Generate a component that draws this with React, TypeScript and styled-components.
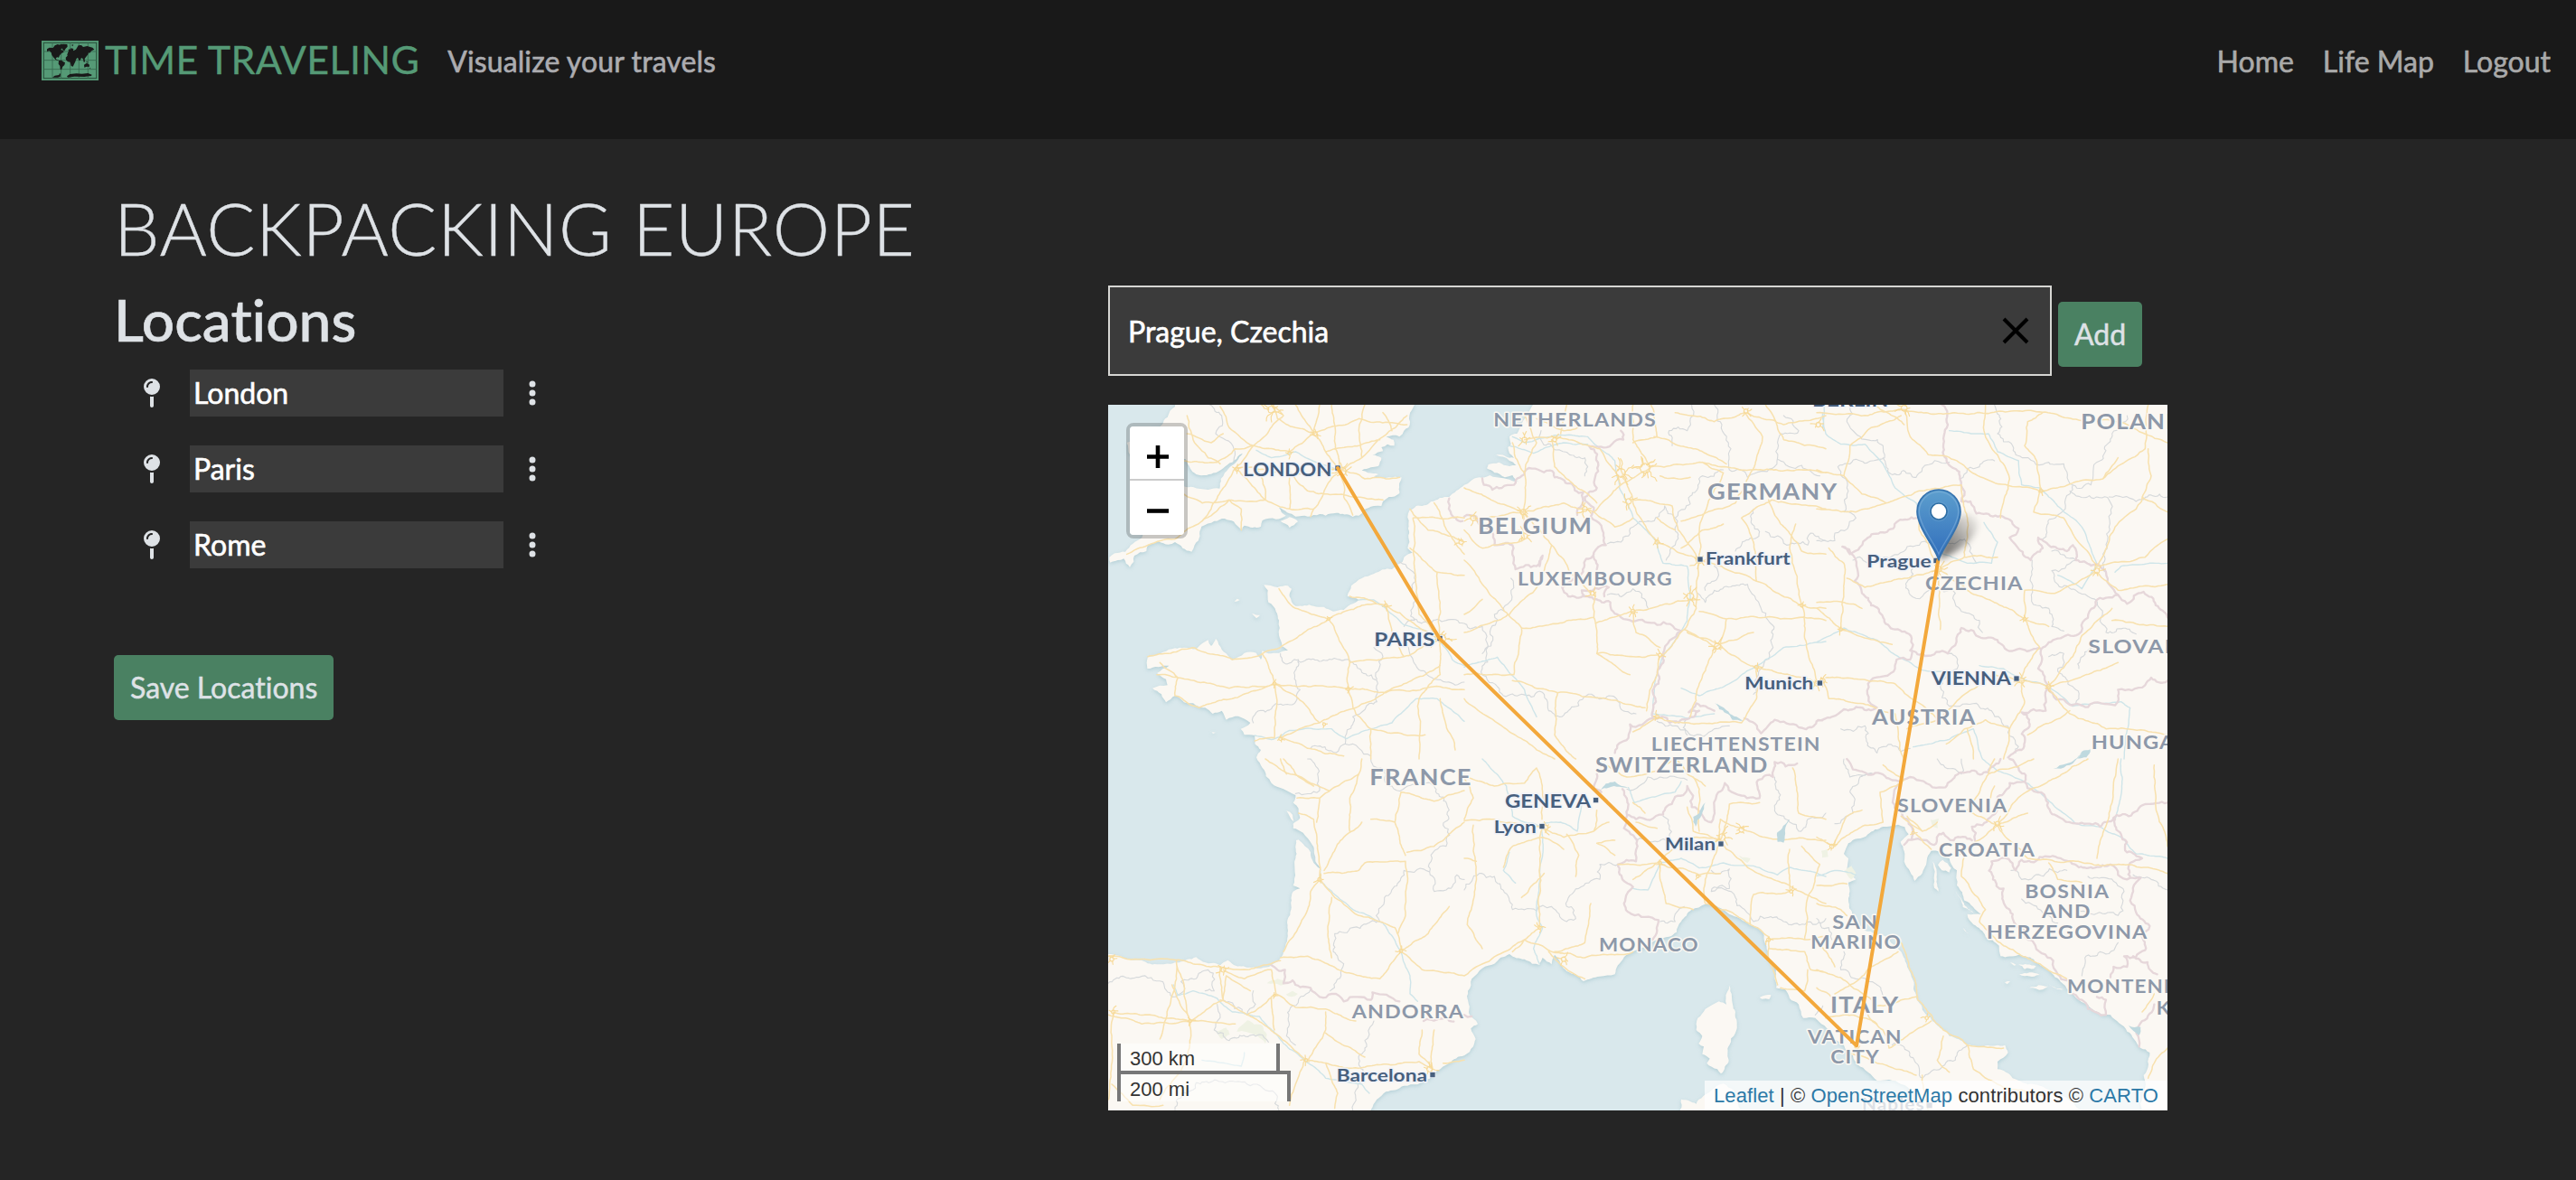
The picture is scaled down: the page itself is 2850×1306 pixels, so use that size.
import React from "react";
import styled, { createGlobalStyle } from "styled-components";
import { FaMapPin, FaEllipsisVertical } from "react-icons/fa6";

const GlobalStyle = createGlobalStyle`
  * { box-sizing: border-box; }
  body {
    margin: 0;
    background: #252525;
    color: #dee2e6;
    font-family: Lato, "Open Sans", sans-serif;
    font-size: 32px;
    font-variant-ligatures: none;
    overflow: hidden;
  }
`;

const Page = styled.div`
  width: 2850px;
  height: 1306px;
  background: #252525;
`;

const Header = styled.header`
  display: flex;
  justify-content: space-between;
  align-items: center;
  height: 154px;
  padding: 0 28px 20px 46px;
  background: #191919;
`;

const Brand = styled.div`
  display: flex;
  align-items: center;
  color: #559a76;
`;

const BrandName = styled.span`
  margin: -2px 0 0 7px;
  font-size: 43px;
  line-height: 52px;
  letter-spacing: 0.35px;
  -webkit-text-stroke: 0.3px currentColor;
  white-space: nowrap;
`;

const Tagline = styled.span`
  margin-left: 31px;
  font-size: 32px;
  letter-spacing: 0.1px;
  color: #acacb0;
  -webkit-text-stroke: 0.6px currentColor;
  white-space: nowrap;
`;

const Nav = styled.nav`
  display: flex;
  gap: 32px;
`;

const NavLink = styled.a`
  font-size: 32px;
  color: #a9a9a9;
  -webkit-text-stroke: 0.6px currentColor;
  white-space: nowrap;
`;

const Main = styled.main`
  padding: 50px 0 0 126px;
`;

const Title = styled.h1`
  margin: 0 0 15px;
  font-size: 80px;
  line-height: 96px;
  font-weight: 300;
  letter-spacing: 0.65px;
  text-transform: uppercase;
  -webkit-text-stroke: 0.4px currentColor;
`;

const Columns = styled.div`
  display: grid;
  grid-template-columns: 1100px 1172px;
`;

const Panel = styled.section`
  display: flex;
  flex-direction: column;
  align-items: flex-start;
`;

const Subtitle = styled.h2`
  margin: 0 0 17px;
  font-size: 64px;
  line-height: 77px;
  font-weight: 500;
  -webkit-text-stroke: 0.6px currentColor;
`;

const LocationList = styled.ul`
  display: flex;
  flex-direction: column;
  gap: 32px;
  margin: 0 0 96px;
  padding: 0 0 0 32px;
  list-style: none;
`;

const LocationRow = styled.li`
  display: flex;
  align-items: center;
  height: 52px;
`;

const LocationField = styled.div`
  width: 347px;
  height: 52px;
  margin: 0 28px 0 32px;
  padding: 0 4px;
  background: #3b3b3b;
  color: #fff;
  font-size: 32px;
  line-height: 52px;
  -webkit-text-stroke: 0.6px currentColor;
`;

const Button = styled.button`
  height: 72px;
  padding: 0 18px;
  border: 0;
  border-radius: 5px;
  background: #4a8162;
  color: #dee2e6;
  font-family: inherit;
  font-variant-ligatures: none;
  font-size: 32px;
  line-height: 72px;
  -webkit-text-stroke: 0.5px currentColor;
  white-space: nowrap;
`;

const SearchRow = styled.div`
  display: flex;
  align-items: flex-start;
  gap: 7px;
  margin-top: 1px;
  ${Button} { margin-top: 18px; }
`;

const SearchBox = styled.div`
  display: flex;
  align-items: center;
  justify-content: space-between;
  width: 1044px;
  height: 100px;
  padding: 0 23px 0 20px;
  border: 2px solid #d6d6d3;
  background: #3b3b3b;
  color: #fff;
  font-size: 32px;
  -webkit-text-stroke: 0.6px currentColor;
`;

const MapFrame = styled.div`
  position: relative;
  width: 1172px;
  height: 781px;
  margin-top: 32px;
  overflow: hidden;
  background: #d9e8ec;
`;

const MapCanvas = styled.svg`
  display: block;
  width: 1172px;
  height: 781px;
`;

const ZoomControl = styled.div`
  position: absolute;
  left: 20px;
  top: 20px;
  width: 68px;
  border: 4px solid rgba(0, 0, 0, 0.2);
  border-radius: 8px;
  background-clip: padding-box;
`;

const ZoomButton = styled.div<{ $first?: boolean }>`
  display: flex;
  align-items: center;
  justify-content: center;
  height: 60px;
  padding-left: 2px;
  padding-top: ${(p) => (p.$first ? 9 : 7)}px;
  background: #fff;
  border-bottom: ${(p) => (p.$first ? "2px solid #ccc" : "0")};
  border-radius: ${(p) => (p.$first ? "4px 4px 0 0" : "0 0 4px 4px")};
`;

const ScaleControl = styled.div`
  position: absolute;
  left: 10px;
  top: 707px;
  font-family: "Liberation Sans", Arial, sans-serif;
  font-size: 22px;
  color: #333;
`;

const ScaleLine = styled.div<{ $width: number; $second?: boolean }>`
  width: ${(p) => p.$width}px;
  height: 34px;
  margin-top: ${(p) => (p.$second ? -4 : 0)}px;
  padding-left: 10px;
  border: 4px solid #777;
  border-top-width: ${(p) => (p.$second ? 4 : 0)}px;
  border-bottom-width: ${(p) => (p.$second ? 0 : 4)}px;
  background: rgba(255, 255, 255, 0.5);
  line-height: 34px;
`;

const Attribution = styled.div`
  position: absolute;
  right: 0;
  bottom: 0;
  height: 33px;
  padding: 0 10px;
  background: rgba(255, 255, 255, 0.7);
  font-family: "Liberation Sans", Arial, sans-serif;
  font-size: 22px;
  line-height: 34px;
  letter-spacing: 0.1px;
  color: #333;
  white-space: nowrap;
  a { color: #2c79a7; }
`;

/* ---------- map geometry: three units per pixel, drawn on six sheets ---------- */

type Pt = [number, number];
type Sheet = "A" | "B" | "C" | "D" | "E" | "F";

const ORIGIN: Record<Sheet, Pt> = {
  A: [-18, -24],
  B: [1182, -24],
  F: [2352, -24],
  C: [-18, 1176],
  D: [1182, 1176],
  E: [2352, 1176],
};

const on = (sheet: Sheet, text: string): Pt[] =>
  text
    .trim()
    .split(/\s+/)
    .map((p) => {
      const [x, y] = p.split(",").map(Number);
      return [x + ORIGIN[sheet][0], y + ORIGIN[sheet][1]] as Pt;
    });

let state = 7;
const rnd = () => {
  state = (state * 1103515245 + 12345) & 0x7fffffff;
  return state / 0x7fffffff - 0.5;
};

const rough = (points: Pt[], amount: number): Pt[] => {
  const out: Pt[] = [points[0]];
  const split = (a: Pt, b: Pt) => {
    const len = Math.hypot(b[0] - a[0], b[1] - a[1]);
    if (len < 13) {
      out.push(b);
      return;
    }
    const k = rnd() * amount * Math.min(len, 70);
    const m: Pt = [
      (a[0] + b[0]) / 2 - ((b[1] - a[1]) / len) * k,
      (a[1] + b[1]) / 2 + ((b[0] - a[0]) / len) * k,
    ];
    split(a, m);
    split(m, b);
  };
  for (let i = 1; i < points.length; i++) split(points[i - 1], points[i]);
  return out;
};

const d = (points: Pt[], close = false) =>
  "M" + points.map((p) => `${p[0].toFixed(1)} ${p[1].toFixed(1)}`).join("L") + (close ? "Z" : "");

const trace = (sheet: Sheet, lines: string[], amount: number) =>
  lines.map((l) => d(rough(on(sheet, l), amount))).join("");

const shape = (sheet: Sheet, text: string, amount = 0.25) => {
  const p = on(sheet, text);
  return d(rough([...p, p[0]], amount), true);
};

const britain = shape(
  "A",
  `240,0 240,30 215,65 195,92 150,120 80,150 90,190 200,190 275,205 290,235 310,255 345,258 375,250 400,235 430,215 455,190 472,178
  450,205 430,225 405,250 392,270 388,302 350,306 300,297 270,295 200,300 180,360 150,420 130,465 100,485 75,512 40,517 22,530
  25,548 50,540 70,535 90,563 103,545 105,525 145,510 150,490 185,478 218,488 240,480 265,500 295,512 305,490 318,475 322,445
  328,428 370,410 405,402 435,412 462,440 470,425 525,428 530,408 575,404 608,392 585,365 612,382 640,395 680,395 700,390 740,392
  775,383 830,396 850,392 865,376 900,360 925,360 930,345 950,330 985,318 992,265 950,265 900,262 915,255 880,250 860,242 890,232
  915,228 925,200 895,190 930,178 925,165 945,155 968,160 965,140 940,130 985,130 1000,110 1015,100 1018,60 1035,24 1035,0`
);

const coast: Pt[] = [
  ...on("B", `228,0 228,24 215,50 190,90 175,120 150,130 155,155 145,165 150,185 165,200 150,200 120,190 105,190 150,210 172,225
    150,228 115,215 80,222 75,235 100,250 135,265 160,258 182,280 150,272 130,268 85,258 50,265 20,278 0,290`),
  ...on("A", `1150,330 1090,345 1040,360 1018,375 1015,420 1018,480 1012,500 1028,515 1000,530 995,545 960,570 900,585 860,600
    825,625 812,660 850,672 830,685 800,705 765,710 700,692 640,692 620,660 627,635 615,625 580,630 535,622 548,640 550,680 575,710
    585,740 585,790 595,825 615,840 585,848 550,850 530,840 525,870 510,848 470,848 430,872 410,850 385,820 375,800 360,825 350,805 320,825
    310,835 270,830 240,832 200,845 150,862 148,900 185,895 220,890 180,915 210,935 215,955 165,965 195,985 210,1012 240,990
    270,1012 300,1015 340,1030 365,1050 395,1040 410,1070 450,1058 490,1080 458,1100 470,1120 505,1122 505,1150 525,1170 510,1195`),
  ...on("C", `530,30 560,80 600,100 640,120 632,145 650,165 655,195 632,215 632,230 665,245 695,285 706,340 728,372 700,345
    690,310 650,268 642,270 640,330 632,420 655,430 632,440 625,500 615,570 600,640 585,668 560,685 525,695 480,692 430,680
    415,668 390,685 360,678 325,668 310,658 280,665 225,680 180,682 120,668 60,655 18,648 -20,640 -20,1220 880,1220 890,1165 910,1130
    940,1105 1000,1085 1085,1062 1110,1035 1150,1010 1200,985`),
  ...on("D", `30,955 38,930 22,895 45,880 30,862 15,840 12,770 25,730 60,695 100,680 150,648 200,665 225,680 250,684 260,660 290,682
    300,650 320,680 340,705 395,738 450,722 500,715 510,685 560,640 600,625 640,600 680,590 705,575 720,540 755,500 800,482 850,495
    890,520 940,545 975,560 995,585 1003,620 1010,665 1035,700 1035,760 1065,765 1080,795 1110,815 1125,860 1165,860`),
  ...on("E", `25,885 50,920 90,950 120,985 135,1015 170,1040 200,1068 240,1065 280,1080 320,1105 350,1220 920,1220 880,1167 850,1140
    800,1110 720,1080 650,1060 600,1030 600,1005 635,975 625,950 560,952 500,948 440,920 400,885 360,845 330,790 320,735
    300,690 280,640 230,590 160,570 120,520 105,470 105,410 130,400 100,365 105,330 90,315 105,280 135,265 170,250 220,225 270,218
    292,226 305,250 278,275 290,340 310,375 325,405 350,380 365,340 380,305 410,310 440,330 465,370 465,420 490,470 545,515
    500,515 520,550 560,590 605,620 610,655 670,650 720,665 770,700 815,745 850,780 900,815 950,850 975,850 1030,905 1075,960
    1105,975 1085,1050 1090,1070 1070,1220 1230,1220`),
  [3560, -40],
];

const land = [
  britain,
  d(rough(coast, 0.22), true),
  shape("A", "590,410 620,397 648,412 620,432"),
  shape("A", "437,678 446,668 455,672"),
  shape("A", "495,718 522,722 510,733"),
  shape("A", "353,1104 375,1112 366,1116"),
  shape("C", "610,172 630,185 634,208 620,190"),
  shape("D", `880,752 888,790 900,840 900,910 880,950 878,1000 852,1045 840,1030 805,1010 815,995 790,980 795,955 778,945 790,920
    770,900 775,860 800,830 845,805 870,815 872,775`),
  shape("D", "712,1200 720,1130 770,1145 820,1100 860,1078 895,1100 920,1200"),
  shape("D", "980,792 1018,783 1012,798 988,797"),
  shape("E", "385,340 398,375 404,440 390,428 390,385"),
  shape("E", "402,352 418,335 446,362 440,377 415,370"),
  shape("E", "462,440 490,485 522,512 485,492"),
  shape("E", "670,682 728,688 720,697 690,698"),
  shape("E", "672,714 740,717 722,722 690,721"),
  shape("E", "705,760 768,755 750,766"),
  shape("E", "770,748 818,765 795,762"),
  shape("E", "642,675 662,684 655,686"),
  shape("E", "624,742 642,738 632,748"),
  shape("E", "485,560 505,580 498,577"),
].join("");

const lakes = [
  shape("D", "450,105 470,82 500,75 545,95 515,92 480,95"),
  shape("B", "830,1015 870,1038 925,1073 890,1070 868,1048"),
  shape("E", "785,33 830,15 880,-20 850,15 810,32"),
  shape("F", "865,1198 880,1175 908,1168 895,1195"),
  shape("D", "1038,245 1080,200 1060,278 1040,275"),
  shape("D", "760,192 780,180 800,145 788,185 768,225"),
  shape("E", "1035,885 1075,890 1070,918"),
].join("");

const rivers = [
  trace("A", ["790,240 740,225 640,180 610,190 560,200 510,175", "850,672 900,672 940,700 1000,755 1060,770 1110,800 1160,870 1200,890", "505,1122 560,1136 620,1105 760,1100 810,1133 890,1100 960,1080 1040,1000 1110,1000 1200,1075"], 0.12),
  trace("B", ["160,130 200,150 300,125 410,130 500,210 515,300 560,400 640,480 660,550 740,560 750,660 740,740 665,850 630,960 625,1050 740,1065 830,1050", "150,160 230,185 330,150 410,155", "0,895 110,862 200,970 240,1060", "720,965 780,990 880,950 1000,870 1060,830 1200,810", "1195,30 1190,100"], 0.12),
  trace("F", ["20,50 30,120 80,155 160,155 230,240 260,300 330,350 420,520 500,550 580,550 600,480 555,415", "440,110 570,120 600,180 670,210 680,290 740,300 820,380 880,430 930,560 880,635 800,590", "0,812 90,765 200,805 240,840 350,905 420,910", "540,890 620,900 700,940 770,960 850,1025 1010,1010 1040,1030 1020,1200", "990,580 1010,560 1164,550", "320,1160 440,1135 520,1100 550,1200"], 0.12),
  trace("C", ["722,372 722,405 770,450 840,505 930,545 990,640 1020,720 1020,780 1045,805", "235,750 250,785 300,770 380,795 430,840 520,855 600,945 690,1015 740,1060 860,1080 885,1110", "330,1000 460,1020 470,975"], 0.12),
  trace("D", ["60,0 140,90 160,190 200,210 258,224 258,330 240,520 260,560 230,630 250,680", "258,215 320,210 375,240 390,150", "170,412 130,370 150,310", "560,430 610,435 650,345 720,330 780,362 860,345 960,355 1040,385 1080,360 1200,390", "545,95 565,145 700,110 720,75"], 0.12),
  trace("E", ["550,0 600,40 680,70 760,130 860,215 940,225 1020,265 1060,315 1164,330", "1010,0 1010,120 990,200", "0,388 60,370 130,385"], 0.12),
].join("");

const borders = [
  trace("B", ["60,268 65,290 125,300 165,290 185,265 205,240 285,242 300,265 350,285 395,315 375,390", "520,110 528,140 490,155 415,162 445,225 440,300 400,330 430,365 420,395 455,425 470,490 430,515 440,570", "430,520 405,535 385,590 325,630 345,660 400,660 430,670 485,680 520,730 600,745 640,755 720,775 660,850 632,960 625,1060", "0,395 40,395 70,430 100,490 160,490 170,570 240,560 260,525 250,560", "400,660 390,640 480,630 465,660", "625,1065 550,1085 545,1130 500,1180", "625,1062 740,1068 780,1040 745,1045 770,1015 830,1040", "930,1065 985,1115 1030,1070 1110,1095 1200,1065"], 0.42),
  trace("A", ["1150,335 1155,380 1195,410"], 0.42),
  trace("F", ["415,24 435,90 420,165 440,225 475,260 480,345 510,345 530,385 650,420 670,435 640,465 710,540 750,500 735,465 830,510 850,490 860,540 960,580 1000,655 960,665 905,710 870,785 800,800 745,835 620,825 600,805 480,765 435,850 360,858 310,840 315,800 260,770 180,690 150,650 125,610 135,570 85,495", "330,400 270,410 170,465 110,520 85,495", "1000,655 1030,685 1085,645 1125,690 1164,730", "745,835 735,900 765,960 760,1040 680,1045 705,1070 680,1170 635,1195", "765,965 840,1020 900,1028 990,1022 1000,970 1090,955 1110,930 1164,940", "315,840 310,870 265,870 255,910 170,950 200,1030 90,1035 50,1060 0,1075"], 0.4),
  trace("C", ["560,685 605,700 600,745 630,735 690,760 720,790 760,780 800,805 890,800 895,775 985,805", "1065,870 1110,865 1165,872"], 0.4),
  trace("D", ["440,50 430,100 455,110", "525,100 545,150 540,185 570,200 660,185 740,90 755,160 820,210 830,170 865,80 900,115 980,130 975,70 1025,60 1030,10 1105,15", "540,190 530,230 575,290 570,340 510,350 525,400 560,425 535,465 555,515 645,535 640,570 625,600", "0,850 25,855"], 0.4),
  trace("E", ["100,0 120,35 240,65 420,95 460,55 570,45 610,0", "640,0 670,30 690,75 640,80 600,125 575,195 515,225 525,270", "270,85 255,125 285,190 320,245 315,265", "290,285 365,270 390,285 420,245 455,270 515,270", "690,75 760,130 790,185 870,215 940,225 985,195 1035,190 1090,150 1164,145", "990,200 1010,250 1030,310 1080,330 1040,345 1040,395 1000,385 975,350 870,360 740,325 680,335 660,370 610,330 580,340 585,400 620,430 650,530 720,610 785,670 800,715 830,735", "1040,395 1075,395 1040,470 1060,510 1105,555 1075,585 1090,635 1020,655 1030,690 985,690 975,725", "1050,655 1130,715", "850,780 900,830 960,850 960,800 930,790", "1120,815 1080,870 1070,955"], 0.42),
].join("");

const regions = [
  trace("A", ["355,24 395,60 375,120 435,170 435,210", "985,545 1040,610 1035,740 1000,760", "1035,735 1140,740 1200,750", "590,850 600,880 650,870 655,970 620,1020 510,1045 500,1080", "650,875 760,870 830,880 910,940 910,1010 830,1060 805,1150 690,1165", "1015,830 1070,910 1140,945 1200,945", "910,935 930,860 900,830", "805,1150 890,1190"], 0.45),
  trace("B", ["830,24 855,90 885,170 880,240 940,265 985,245 1040,200 1050,120 1110,110 1060,60", "1040,205 1120,225 1180,260", "475,485 520,480 560,430 610,410 665,360 700,400 710,380 770,310 790,260 860,240", "700,400 700,490 670,540", "960,370 955,420 980,445 900,510", "1000,445 1070,490 1140,490 1150,450 1200,475", "940,620 830,640 800,680 775,650", "940,620 985,700 1020,780 1025,830 985,900 960,985", "800,640 840,600 830,560", "0,750 60,760 75,850 60,900 110,960 130,990 250,975 280,1040 330,1055 430,990 480,990 570,1050", "60,850 100,720 150,680 155,600", "475,655 560,635 610,700", "690,160 680,110 740,110 755,24", "400,260 400,200 350,190 260,150 255,110", "640,1075 700,1090 750,1120 830,1100 880,1090", "735,1070 740,1120"], 0.5),
  trace("F", ["110,24 100,80 130,120 220,160 225,200 130,205 70,230 100,300 90,380 130,400 60,450 60,475 0,475", "220,200 240,250 330,265 350,235 440,215", "590,24 600,120 650,160 690,200 770,215 820,220 850,290 910,290 940,210 980,120 1030,60", "475,270 540,230 590,210", "850,290 840,320 800,390 750,470", "840,310 970,340 970,430 950,520 960,580", "970,330 1060,345 1164,330", "120,540 230,530 300,495 380,480 490,470 530,550", "320,560 310,655 460,650 480,710 540,740 550,780", "715,540 730,690 770,700 780,760 820,775", "780,510 860,540 780,575 800,620 860,640 900,660 940,700 960,780 1060,785", "440,850 470,890 440,920 410,960 440,1025 530,1015 580,1040 640,1100 660,1180", "770,860 820,850 800,900 870,1000 840,1020", "940,830 890,845 870,900", "80,1100 160,1090 200,1180 310,1165"], 0.5),
  trace("C", ["18,745 120,725 200,740 230,790 270,770 260,740 350,700 370,770 340,770", "380,815 370,900 420,935 520,915 550,940", "500,770 480,850 400,800", "680,0 715,60 720,105 640,115", "890,0 960,90 1100,90 1150,170 1130,220 1140,290 1090,340 1085,375 1000,370 935,460 920,540 830,560 770,580 765,640 800,680 790,710 755,770", "1085,375 1100,440 1140,435 1175,385 1200,400", "690,765 630,820 610,920 640,950", "900,870 870,960 850,1010 840,1100 830,1165", "240,1165 310,1075 420,1070 500,1080 580,1120 585,1165"], 0.5),
  trace("D", ["0,435 50,380 100,390 160,500 240,505 290,490 340,540 370,530 340,490 380,430 450,400 450,350 510,350", "650,540 700,540 730,490", "820,440 880,430 880,365 820,370", "820,440 900,460 960,540 1060,540 1200,530", "1030,60 1035,180 1080,210 1110,240 1140,200 1200,180", "660,190 680,260 570,270", "540,100 580,90 650,60 740,70", "1165,850 1190,820"], 0.5),
  trace("E", ["90,0 110,60 190,50 110,110 120,180 60,215", "0,530 40,560 50,600", "90,640 80,700 130,730 200,750 230,800", "250,950 330,1010 350,1060 460,1000 500,950", "645,370 680,400 720,390 830,370", "680,465 800,545", "900,390 960,395 1020,440 1000,520 860,500", "1050,385 1110,400 1164,435", "1000,610 940,640 890,660 880,720", "480,0 480,50 420,20 400,0"], 0.5),
].join("");

const roads = [
  trace("A", ["790,240 740,180 700,120 660,60 640,24", "790,240 700,250 620,250 510,235 440,235", "790,240 770,130 760,24", "790,240 860,200 930,130 1010,60", "790,240 870,270 940,270 985,265", "790,240 740,300 700,370 690,395", "790,240 800,330 830,390", "440,235 400,300 330,410 240,470 150,490 80,520", "440,235 500,160 600,60 560,24", "270,210 380,215 440,170 500,160", "500,160 620,180 700,120 850,70 1010,90", "440,235 540,340 620,370 700,370", "280,60 300,140 350,200 390,220", "330,410 420,340 540,340", "620,260 620,370", "460,440 460,370 420,340", "560,24 580,70 640,100 700,120", "740,180 850,160 920,140", "870,24 850,110 860,200", "240,300 330,350 420,340", "390,30 420,100 500,160", "620,250 680,310 830,330 930,340", "720,24 700,120", "540,340 530,270 510,235", "280,120 360,150 400,120", "930,50 960,110", "1118,800 1050,720 1040,620 1030,400", "1118,800 1120,680 1110,580 1020,500", "1118,800 940,690 820,660", "1118,800 1000,860 820,880 815,965", "1118,800 1120,920 1050,1000 1050,1200", "815,965 690,960 570,950 420,965 250,930 180,920", "570,950 570,1130 505,1140", "815,965 840,1050 890,1100 1070,1120", "585,635 640,700 750,735 860,690 940,690", "750,735 620,810 530,850 430,870 300,830 150,860", "570,950 530,850", "570,950 430,1000 320,1030 240,990 250,930", "1030,400 1200,400", "1020,370 1080,440 1200,480", "1110,580 1200,590", "940,690 960,780 1000,860", "590,1130 720,1080 840,1030 1000,950 1120,890", "590,1130 680,1165 800,1190", "890,1100 890,1200", "720,1080 650,1000 570,950", "750,735 820,880", "250,930 190,880", "1200,970 1120,960 940,980 815,965", "1120,1000 1170,1170", "1100,350 1150,450 1200,520"], 0.16),
  trace("B", ["200,60 240,150 200,250 195,380 30,400", "195,380 290,490 370,600 420,650", "195,380 330,350 430,380 520,290", "520,290 450,170 300,130 200,140", "520,290 620,230 790,215 960,240 1200,250", "520,240 560,350 640,480 780,540", "780,540 710,440 690,360 560,340", "780,540 790,400 860,250 790,215", "780,540 770,700 730,770 650,860 605,1040", "780,540 970,610 1120,690 1200,700", "970,610 960,480 920,400 1020,340 1200,370", "780,710 870,735 1000,730 1200,740", "870,735 850,820 740,780", "850,820 930,880 970,895 1170,950", "145,720 60,620 0,540", "145,720 190,765 430,730 435,650", "190,765 165,920 0,920", "430,730 440,850 560,860 640,855", "440,850 550,920", "435,750 560,710 650,690 770,670", "560,710 570,780 650,830", "0,1000 150,1110 300,1200", "310,980 300,1120 370,1200", "310,980 160,940", "310,980 470,1000 600,1030", "630,1060 700,1080 840,1080 920,1080", "640,1060 560,1110", "195,380 110,350 0,300", "195,380 200,470 60,500 0,440", "290,140 300,230 340,270 440,350", "560,24 560,140 620,230", "630,130 760,170 870,220", "620,24 640,130 560,150", "700,50 830,80 930,50 1060,90 1200,60", "930,50 990,130 950,250", "1000,24 1060,140 1200,170", "950,250 900,350 720,410", "1120,690 1130,800 1170,940", "1120,690 1080,500 1100,420", "640,400 700,440", "560,400 500,430 430,380", "150,720 250,620 290,490", "0,780 145,720", "60,670 0,720", "830,830 780,950 750,1060", "730,770 830,830 960,780", "970,895 970,1000 920,1080", "650,260 710,270 750,265", "860,420 790,440 720,500", "160,150 170,200 200,250", "240,70 330,110 440,90", "340,24 320,120", "1010,340 1050,420 1120,510 1200,520"], 0.16),
  trace("F", ["0,50 170,60 290,40 420,55 720,45 870,75", "290,40 310,130 370,190 430,195 560,270 740,310 860,280 950,270 1090,170 1100,24", "280,60 180,100 110,160 90,260 0,240", "90,260 150,320 230,350 340,310 480,290", "230,350 130,380 0,370", "560,24 555,110 600,190 640,270 610,400", "740,310 730,210 690,160 700,80 750,50", "740,310 720,380 820,400 930,560", "405,570 500,640 690,735 770,760", "405,570 300,600 160,630 100,600", "405,570 340,440 340,350", "405,570 490,530 600,530", "405,570 410,770", "690,735 690,640 790,650 920,580", "690,735 740,830 680,930", "0,700 80,770 170,800 250,820", "80,770 90,550 40,500", "0,680 90,680 150,700", "680,940 590,920 540,950 400,1070 300,1100", "680,940 770,960 850,860 880,790 980,700", "680,940 690,1010 640,1100 620,1200", "770,960 840,1050 960,1100 1164,1120", "400,1070 260,950 30,930", "15,930 40,1000 170,1020 260,1050 290,1200", "930,560 1090,530 1164,470", "1100,170 1110,260 1060,370 990,430 930,560", "950,270 1000,200", "770,960 920,910 1000,880", "840,1040 700,1120", "500,1100 520,1200", "480,290 500,400 490,530", "290,90 200,30", "870,75 1000,80 1164,150", "1080,330 1164,380", "930,580 1000,640 1164,620", "980,740 1164,760", "640,1100 560,1070 490,1100 430,1150"], 0.16),
  trace("C", ["18,655 120,665 270,670 390,690 480,700 590,670", "245,670 240,750 190,930", "390,690 400,800 290,870 35,840 30,930 20,1130", "400,700 470,730 560,700 575,780 480,850 390,800", "480,850 570,910 680,1000 740,900 740,840", "575,780 640,825 740,830 840,870", "590,660 680,655 810,710 920,730 990,635", "600,640 680,500 690,440 720,400", "720,400 710,250 700,200 650,180", "720,400 770,460 850,520 970,560 990,635", "735,370 800,260 860,210", "735,380 850,370 870,345 1005,340 1005,520 980,580", "710,210 720,130 760,100 850,50 860,0", "540,0 600,40 690,80 750,105", "645,130 720,130", "820,240 820,130 850,50", "1005,320 970,210 990,110 1100,140 1200,105", "970,210 890,200", "1010,310 1100,290 1200,210", "990,635 1080,580 1150,490", "990,640 1060,700 1200,720", "680,1000 800,1025 1050,1005 1095,1030", "1095,1030 1050,980 1060,900", "1095,1030 1100,900", "740,910 870,990", "20,850 130,880 290,870 230,750", "290,870 270,750 245,680", "290,870 440,880", "290,870 280,1000 190,1130", "760,460 750,600 760,660", "560,790 570,900", "30,1080 100,1150 200,1150", "670,1000 640,1080 620,1150", "740,1010 780,1110 770,1160", "1200,1000 1130,1010", "600,0 640,50 700,90", "590,0 610,50", "400,800 410,720 490,770"], 0.14),
  trace("D", ["258,224 100,200 0,205", "258,224 250,380 250,560 200,600 40,690 0,720", "258,224 330,260 430,240 440,170", "265,380 190,460", "340,250 380,320 370,390", "330,300 260,260 160,290 130,360", "240,30 260,110 258,200", "0,60 100,90 200,80 240,30", "0,200 30,130 0,60", "30,220 40,390 10,550 60,630", "200,600 290,640 400,660 500,650 560,640", "280,640 330,690 400,730", "300,640 400,610 420,480", "510,350 640,345 700,290 760,260 850,270", "850,270 850,200 920,230 1000,260 1200,270", "850,270 760,240 740,160", "850,275 940,360 1080,420 1200,480", "850,275 800,400 800,480 890,510 950,550", "650,345 670,480 760,500", "650,350 780,385 850,380", "780,240 780,100 760,60", "650,340 560,400", "950,550 1010,590 1010,660 1040,750", "950,550 960,450 1080,440 1080,300", "1010,600 1130,600 1200,590", "1130,600 1140,460 1180,350", "1010,630 1130,640 1150,700 1200,710", "500,320 440,280 500,270", "570,210 640,230", "430,240 480,210", "470,20 540,60 640,40 700,0", "850,270 880,150 980,145", "1180,350 1120,290", "1050,760 1130,770 1140,700", "600,180 560,145", "200,600 160,640", "0,330 40,340", "700,0 740,50 800,90", "1090,30 1110,180 1200,200"], 0.16),
  trace("E", ["0,260 60,290 160,220 220,210", "0,480 80,500 100,520", "0,420 100,415", "50,290 100,190 150,170", "220,210 210,110 290,70 220,20", "300,190 350,240 400,210", "600,220 500,170 570,50 720,0", "600,220 700,330 860,340 1100,360 1164,380", "600,220 680,120 800,60 900,0", "600,220 520,280 470,320", "600,220 700,180", "490,320 480,390 560,500 540,540 620,620 740,680 830,730", "770,345 800,400 880,410", "1120,20 1130,180 1164,290", "1000,0 970,180 930,330", "280,610 320,720 335,800 420,900 500,950 620,960", "180,690 240,660 270,640", "180,690 130,740 60,780", "0,700 100,740 200,820", "170,850 220,900 240,960 300,920 380,870", "120,980 200,1010 330,1050", "420,920 400,1000 440,1040", "500,950 520,1030 600,1080 760,1120", "30,860 120,850 200,880", "60,800 0,760", "1164,960 1120,1010 1100,1060", "1080,840 1120,780", "570,45 590,0", "330,250 380,300", "350,240 280,190", "0,600 60,690", "200,820 280,800 330,790", "350,1050 370,1167", "570,150 590,90"], 0.16),
].join("");

/* ring roads and short spurs round the bigger cities */
const towns: [Sheet, number, number, number][] = [
  ["A", 795, 245, 34], ["A", 560, 40, 30], ["A", 705, 120, 18], ["A", 445, 238, 16], ["A", 620, 185, 14], ["A", 1125, 800, 36],
  ["A", 1190, 480, 20], ["A", 940, 690, 14], ["A", 815, 968, 14], ["A", 570, 950, 14], ["A", 590, 1133, 14], ["A", 735, 1085, 12],
  ["A", 750, 735, 12], ["B", 520, 250, 38], ["B", 600, 235, 42], ["B", 195, 380, 24], ["B", 30, 400, 24], ["B", 200, 460, 26],
  ["B", 200, 140, 22], ["B", 300, 140, 18], ["B", 780, 540, 28], ["B", 750, 660, 30], ["B", 840, 825, 26], ["B", 425, 650, 18],
  ["B", 1170, 950, 20], ["B", 970, 895, 16], ["B", 650, 855, 16], ["B", 640, 1060, 16], ["B", 935, 45, 18], ["B", 1120, 690, 14],
  ["B", 545, 345, 24], ["B", 560, 710, 18], ["B", 400, 370, 22], ["B", 640, 480, 18], ["F", 290, 35, 26], ["F", 405, 570, 24],
  ["F", 80, 770, 14], ["F", 690, 735, 14], ["F", 680, 940, 22], ["F", 770, 960, 18], ["F", 930, 575, 22], ["F", 745, 310, 14],
  ["F", 20, 940, 20], ["F", 5, 90, 20], ["C", 720, 400, 16], ["C", 400, 700, 20], ["C", 290, 870, 14], ["C", 35, 840, 16],
  ["C", 990, 637, 14], ["C", 1085, 1030, 24], ["C", 675, 1000, 14], ["C", 570, 785, 10], ["C", 30, 665, 18], ["D", 270, 228, 22],
  ["D", 855, 260, 30], ["D", 920, 235, 22], ["D", 650, 345, 14], ["D", 330, 665, 20], ["D", 1010, 600, 16], ["D", 1085, 440, 14],
  ["D", 775, 390, 12], ["D", 250, 560, 14], ["E", 50, 290, 18], ["E", 600, 215, 20], ["E", 135, 970, 22], ["E", 365, 860, 14],
  ["E", 345, 1140, 20], ["E", 320, 245, 12],
];

const townRoads = towns
  .map(([sheet, cx, cy, r]) => {
    const [ox, oy] = ORIGIN[sheet];
    const x = cx + ox;
    const y = cy + oy;
    let out = "";
    const ring: Pt[] = [];
    for (let i = 0; i <= 8; i++) {
      const a = (i / 8) * Math.PI * 2;
      const q = r * 0.4;
      ring.push([x + Math.cos(a) * q, y + Math.sin(a) * q]);
    }
    out += d(rough(ring, 0.2));
    const spokes = Math.round(r / 4);
    for (let i = 0; i < spokes; i++) {
      const a = (i / spokes) * Math.PI * 2 + rnd();
      const b = a + rnd() * 1.4;
      const far = r * (1 + rnd() * 0.8);
      out += d(rough([[x + Math.cos(b) * r * 0.3, y + Math.sin(b) * r * 0.3], [x + Math.cos(a) * far, y + Math.sin(a) * far]], 0.4));
    }
    return out;
  })
  .join("");

const greens = [
  shape("C", "445,905 480,868 530,885 545,915 540,945 505,915"),
  shape("C", "375,905 410,892 422,915 395,930"),
  shape("C", "545,745 580,730 615,740 590,752"),
  shape("C", "608,782 630,770 648,780 625,790"),
  shape("E", "378,202 405,198 402,230 385,225"),
  shape("E", "90,372 115,355 130,380 115,400"),
  shape("E", "15,305 35,300 38,325 18,328"),
  shape("D", "900,315 950,330 940,345"),
].join("");

type Label = { s: Sheet; t: string; x: number; w: number; y: number; size: number; city?: boolean };

const labels: Label[] = [
  { s: "B", t: "NETHERLANDS", x: 102, w: 533, y: 97, size: 63 },
  { s: "B", t: "GERMANY", x: 812, w: 424, y: 338, size: 73 },
  { s: "B", t: "BELGIUM", x: 50, w: 372, y: 452, size: 73 },
  { s: "B", t: "LUXEMBOURG", x: 182, w: 506, y: 624, size: 63 },
  { s: "B", t: "LIECHTENSTEIN", x: 625, w: 555, y: 1174, size: 63 },
  { s: "F", t: "POLAND", x: 882, w: 334, y: 104, size: 68 },
  { s: "F", t: "CZECHIA", x: 365, w: 317, y: 639, size: 63 },
  { s: "F", t: "SLOVAKIA", x: 906, w: 380, y: 849, size: 63 },
  { s: "F", t: "HUNGARY", x: 916, w: 366, y: 1166, size: 63 },
  { s: "F", t: "AUSTRIA", x: 188, w: 337, y: 1086, size: 68 },
  { s: "C", t: "FRANCE", x: 891, w: 331, y: 86, size: 73 },
  { s: "C", t: "ANDORRA", x: 832, w: 364, y: 860, size: 63 },
  { s: "D", t: "SWITZERLAND", x: 440, w: 565, y: 46, size: 68 },
  { s: "D", t: "MONACO", x: 452, w: 323, y: 639, size: 63 },
  { s: "E", t: "SLOVENIA", x: 272, w: 358, y: 178, size: 63 },
  { s: "E", t: "CROATIA", x: 410, w: 312, y: 325, size: 63 },
  { s: "E", t: "BOSNIA", x: 696, w: 272, y: 461, size: 63 },
  { s: "E", t: "AND", x: 753, w: 154, y: 529, size: 63 },
  { s: "E", t: "HERZEGOVINA", x: 569, w: 526, y: 598, size: 63 },
  { s: "E", t: "SAN", x: 57, w: 144, y: 563, size: 63 },
  { s: "E", t: "MARINO", x: -15, w: 293, y: 631, size: 63 },
  { s: "E", t: "ITALY", x: 50, w: 220, y: 843, size: 73 },
  { s: "E", t: "VATICAN", x: -25, w: 305, y: 944, size: 63 },
  { s: "E", t: "CITY", x: 51, w: 154, y: 1012, size: 63 },
  { s: "E", t: "MONTENEGRO", x: 836, w: 508, y: 778, size: 63 },
  { s: "E", t: "KOSOVO", x: 1132, w: 290, y: 850, size: 63 },
  { s: "A", t: "LONDON", x: 471, w: 287, y: 260, size: 64, city: true },
  { s: "A", t: "PARIS", x: 906, w: 194, y: 825, size: 64, city: true },
  { s: "B", t: "Frankfurt", x: 806, w: 274, y: 556, size: 59, city: true },
  { s: "B", t: "Munich", x: 936, w: 221, y: 968, size: 59, city: true },
  { s: "F", t: "BERLIN", x: -10, w: 246, y: 31, size: 64, city: true },
  { s: "F", t: "Prague", x: 171, w: 207, y: 565, size: 59, city: true },
  { s: "F", t: "VIENNA", x: 385, w: 258, y: 954, size: 64, city: true },
  { s: "C", t: "Barcelona", x: 781, w: 294, y: 1070, size: 59, city: true },
  { s: "D", t: "GENEVA", x: 140, w: 278, y: 161, size: 64, city: true },
  { s: "D", t: "Lyon", x: 103, w: 134, y: 246, size: 59, city: true },
  { s: "D", t: "Milan", x: 671, w: 161, y: 302, size: 59, city: true },
  { s: "E", t: "Naples", x: 155, w: 200, y: 1168, size: 59 },
];

const dots: [Sheet, number, number][] = [
  ["A", 780, 234], ["A", 1119, 800], ["B", 783, 537], ["B", 1180, 948], ["F", 663, 933], ["F", 396, 541],
  ["D", 437, 137], ["D", 258, 224], ["D", 852, 282], ["C", 1095, 1049],
];

const route = d([...on("A", "780,234 1118,800"), ...on("E", "132,952"), ...on("F", "403,540")]);

const TravelMap = () => (
  <MapCanvas viewBox="0 0 3516 2343">
    <defs>
      <filter id="shore" x="-5%" y="-5%" width="110%" height="110%">
        <feGaussianBlur stdDeviation="7" />
      </filter>
      <filter id="soft" x="-50%" y="-50%" width="200%" height="200%">
        <feGaussianBlur stdDeviation="11" />
      </filter>
      <linearGradient id="pinBody" x1="0" y1="0" x2="0" y2="1">
        <stop offset="0" stopColor="#5d9fce" />
        <stop offset="1" stopColor="#2f6cbb" />
      </linearGradient>
      <linearGradient id="pinShade" x1="0" y1="1" x2="1" y2="0">
        <stop offset="0" stopColor="#000" stopOpacity="0.6" />
        <stop offset="0.45" stopColor="#000" stopOpacity="0.38" />
        <stop offset="1" stopColor="#000" stopOpacity="0" />
      </linearGradient>
    </defs>
    <rect width="3516" height="2343" fill="#d9e8ec" />
    <path d={land} fill="#a9c9d0" opacity="0.75" filter="url(#shore)" transform="translate(0 5)" />
    <path d={land} fill="#fbf8f3" />
    <path d={greens} fill="#eff2e4" />
    <g fill="none" strokeLinejoin="round" strokeLinecap="round">
      <path d={regions} stroke="#d6d9db" strokeWidth="3.4" />
      <path d={rivers} stroke="#cfe5e9" strokeWidth="4.2" />
      <path d={borders} stroke="#e6d7da" strokeWidth="7" />
      <path d={roads} stroke="#f8e1ae" strokeWidth="4.6" />
      <path d={townRoads} stroke="#f7da99" strokeWidth="3.4" />
    </g>
    <path d={lakes} fill="#bfd9df" />
    {dots.map(([s, x, y], i) => (
      <rect key={i} x={x + ORIGIN[s][0] - 9} y={y + ORIGIN[s][1] - 9} width="18" height="18" fill="#475f7d" stroke="#eef1f6" strokeWidth="2" />
    ))}
    <rect x={365 + 2352} y={1141 + 1176} width="18" height="18" fill="#8d98a9" />
    {labels.map((l) => (
      <text
        key={l.t}
        x={l.x + ORIGIN[l.s][0] - 5}
        y={l.y + ORIGIN[l.s][1]}
        textLength={l.w + (l.city ? 7 : 9)}
        lengthAdjust="spacingAndGlyphs"
        fontFamily="Lato, sans-serif"
        fontSize={l.size}
        fontWeight={700}
        letterSpacing={l.city ? 0 : 3}
        fill={l.city ? "#475f7d" : "#8d98a9"}
        stroke={l.city ? "#f0f2f8" : "#fbf8f3"}
        strokeWidth="9"
        strokeLinejoin="round"
        paintOrder="stroke"
      >
        {l.t}
      </text>
    ))}
    <path d={route} fill="none" stroke="#f3a83b" strokeWidth="12" strokeLinejoin="round" strokeLinecap="round" />
    <g transform="translate(2352 -24)">
      <path d="M406 538 L425 450 Q460 385 505 388 Q560 405 515 465 Q480 510 406 538Z" fill="url(#pinShade)" filter="url(#soft)" />
      <path
        d="M405 541 C400 508 333 432 333 379 A72 73 0 0 1 477 379 C477 432 410 508 405 541Z"
        fill="url(#pinBody)"
        stroke="#3572ae"
        strokeWidth="5"
      />
      <path
        d="M405 520 C398 494 340 424 340 379 A65 66 0 0 1 470 379 C470 424 412 494 405 520Z"
        fill="none"
        stroke="#8fbbe0"
        strokeOpacity="0.45"
        strokeWidth="4"
      />
      <circle cx="405" cy="378" r="33" fill="#6aa2d2" opacity="0.5" />
      <circle cx="405" cy="378" r="27" fill="#fff" stroke="#2e6ea5" strokeWidth="5" />
    </g>
  </MapCanvas>
);

const WorldLogo = () => (
  <svg width="63" height="44" viewBox="48 42 189 132">
    <rect x="48" y="42" width="189" height="132" fill="#559a76" />
    <rect x="55" y="49" width="175" height="118" fill="none" stroke="#27503a" strokeWidth="3" />
    <g stroke="#37694f" strokeWidth="2.5">
      <path d="M84 48V168M113 48V168M143 48V168M172 48V168M202 48V168M55 78H230M55 107H230M55 137H230" />
    </g>
    <g fill="#191919">
      <path d="M66 70l8-5 12 1 6-8 9-4 14 4 3 8-7 6 8 2 3 6-8 4-6 7-3 7-5-1-5 3 3 5 7 2-2 2-9-4-7-8-5-7-2-8-6-6-8 2z" />
      <path d="M108 55l12-2 13 1 1 8-6 6-4 8-5-2-3-9z" />
      <path d="M105 108l9-1 6 5 6 3-2 8-6 5-4 11-4-2-1-11-5-7z" />
      <path d="M133 88l5-12 8-9 8 2-1 7 9-5 8-13 10-1 6 6 13-3 18 5 6 6-9 5-7 8-3-3-2 7-6 7-5 7 1 10-4-2-3-8-5-3-4 9-4-1-4-9-5 5-3 9-4 8-4 8-6-2-3-13-8-1-6-6-1-8 6-6z" />
      <path d="M147 56l7-1-3 6zM136 75l4-6 2 7zM187 108l6 4-5 1zM189 122l9-6 9 6-1 7-8-1-8 3zM195 110l9 4-6 1zM208 131l3 4-4-1z" />
      <path d="M132 160l10-7 22-2 18 1 20-2 13 5-2 4-23 3-33-1-22 3zM84 164l8-6 14-2 2-6 3 3-1 9-8 2z" />
    </g>
  </svg>
);

const places = ["London", "Paris", "Rome"];

export default function App() {
  return (
    <Page>
      <GlobalStyle />
      <Header>
        <Brand>
          <WorldLogo />
          <BrandName>TIME TRAVELING</BrandName>
          <Tagline>Visualize your travels</Tagline>
        </Brand>
        <Nav>
          <NavLink>Home</NavLink>
          <NavLink>Life Map</NavLink>
          <NavLink>Logout</NavLink>
        </Nav>
      </Header>
      <Main>
        <Title>Backpacking Europe</Title>
        <Columns>
          <Panel>
            <Subtitle>Locations</Subtitle>
            <LocationList>
              {places.map((place) => (
                <LocationRow key={place}>
                  <FaMapPin size={32} style={{ width: 20 }} />
                  <LocationField>{place}</LocationField>
                  <FaEllipsisVertical size={32} style={{ width: 8 }} />
                </LocationRow>
              ))}
            </LocationList>
            <Button>Save Locations</Button>
          </Panel>
          <div>
            <SearchRow>
              <SearchBox>
                Prague, Czechia
                <svg width="30" height="30" viewBox="0 0 30 30" stroke="#000" strokeWidth="4">
                  <path d="M2 2L28 28M28 2L2 28" />
                </svg>
              </SearchBox>
              <Button>Add</Button>
            </SearchRow>
            <MapFrame>
              <TravelMap />
              <ZoomControl>
                <ZoomButton $first>
                  <svg width="24" height="25" viewBox="0 0 24 25">
                    <path d="M0 12.5H24M12 0V25" stroke="#000" strokeWidth="4.6" />
                  </svg>
                </ZoomButton>
                <ZoomButton>
                  <svg width="24" height="5" viewBox="0 0 24 5">
                    <path d="M0 2.5H24" stroke="#000" strokeWidth="4.6" />
                  </svg>
                </ZoomButton>
              </ZoomControl>
              <ScaleControl>
                <ScaleLine $width={180}>300 km</ScaleLine>
                <ScaleLine $width={192} $second>
                  200 mi
                </ScaleLine>
              </ScaleControl>
              <Attribution>
                <a>Leaflet</a> | © <a>OpenStreetMap</a> contributors © <a>CARTO</a>
              </Attribution>
            </MapFrame>
          </div>
        </Columns>
      </Main>
    </Page>
  );
}
